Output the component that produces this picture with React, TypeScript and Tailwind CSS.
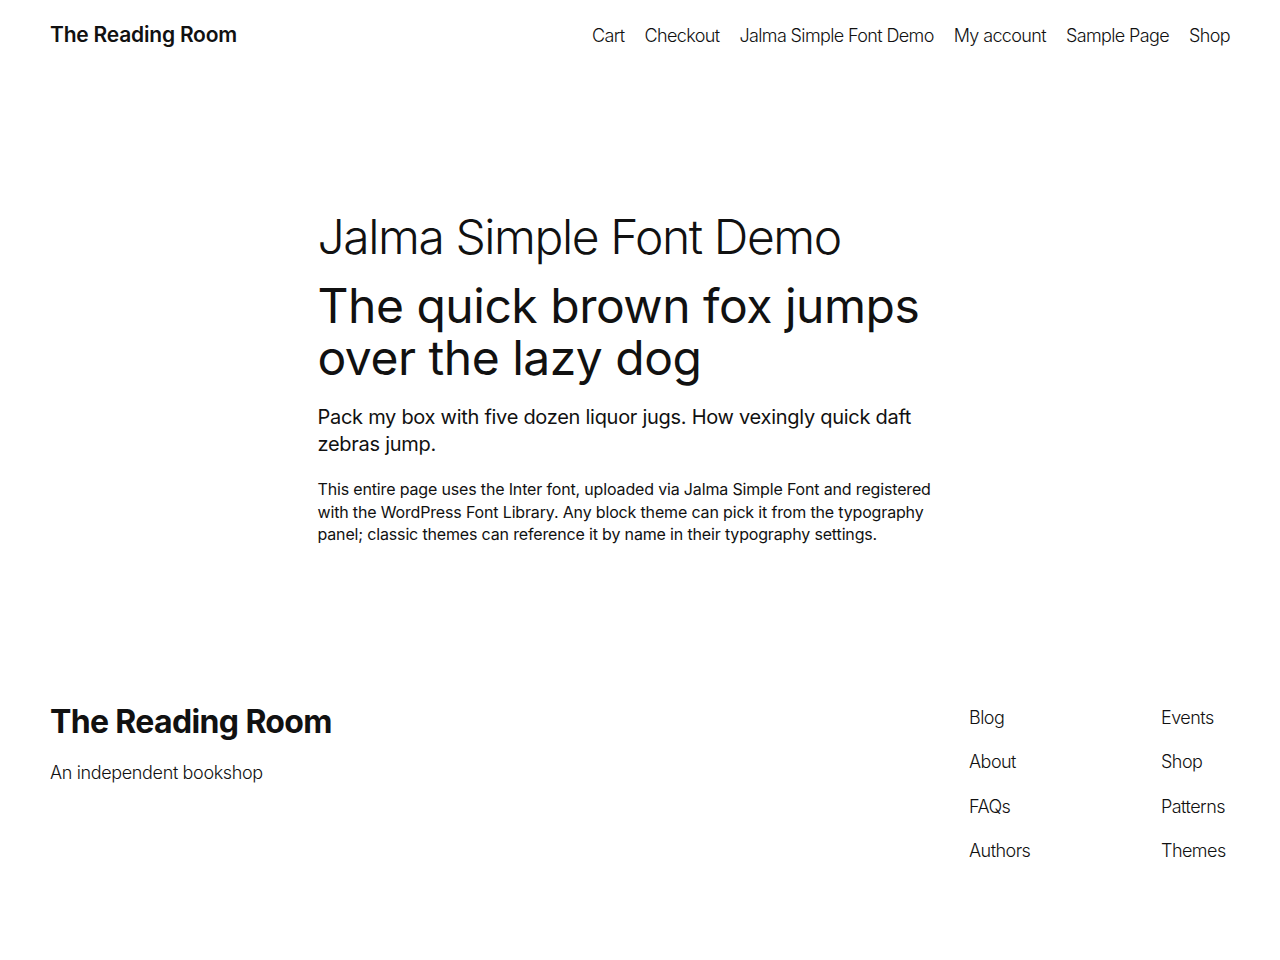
export default function App() {
  const nav = ['Cart', 'Checkout', 'Jalma Simple Font Demo', 'My account', 'Sample Page', 'Shop'];
  const colA = ['Blog', 'About', 'FAQs', 'Authors'];
  const colB = ['Events', 'Shop', 'Patterns', 'Themes'];

  return (
    <div className="min-h-screen bg-white text-[#111111] font-['Inter','Noto_Sans',sans-serif]">
      {/* Header */}
      <header className="flex h-[70px] items-center justify-between px-[50px]">
        <a href="#" className="text-[21px] font-semibold tracking-[-0.01em]">
          The Reading Room
        </a>
        <nav className="flex items-center gap-[20px] text-[18px] font-light tracking-[-0.035em]">
          {nav.map((item) => (
            <a key={item} href="#">
              {item}
            </a>
          ))}
        </nav>
      </header>

      {/* Content */}
      <main className="pt-[137px] pb-[155px]">
        <div className="mx-auto w-[645px]">
          <h1 className="text-[48px] font-light leading-[60px] tracking-[-0.03em]">
            Jalma Simple Font Demo
          </h1>
          <h2 className="mt-[13px] text-[48px] font-normal leading-[52px] tracking-[-0.01em]">
            The quick brown fox jumps over the lazy dog
          </h2>
          <p className="mt-[20px] text-[20px] leading-[27px] tracking-[-0.014em]">
            Pack my box with five dozen liquor jugs. How vexingly quick daft zebras jump.
          </p>
          <p className="mt-[20px] text-[16px] leading-[22.5px] tracking-[-0.01em]">
            This entire page uses the Inter font, uploaded via Jalma Simple Font and registered
            with the WordPress Font Library. Any block theme can pick it from the typography
            panel; classic themes can reference it by name in their typography settings.
          </p>
        </div>
      </main>

      {/* Footer */}
      <footer className="flex items-start justify-between px-[50px] pb-[80px]">
        <div>
          <h2 className="text-[32px] font-bold leading-[41px] tracking-[-0.02em]">
            The Reading Room
          </h2>
          <p className="mt-[17px] text-[18px] font-light leading-[27px] tracking-[-0.02em]">
            An independent bookshop
          </p>
        </div>
        <div className="flex pt-[3px] text-[18px] font-light leading-[27px] tracking-[-0.03em]">
          <ul className="flex w-[192px] flex-col gap-[17.5px]">
            {colA.map((item) => (
              <li key={item}>
                <a href="#">{item}</a>
              </li>
            ))}
          </ul>
          <ul className="flex w-[69px] flex-col gap-[17.5px]">
            {colB.map((item) => (
              <li key={item}>
                <a href="#">{item}</a>
              </li>
            ))}
          </ul>
        </div>
      </footer>
    </div>
  );
}
